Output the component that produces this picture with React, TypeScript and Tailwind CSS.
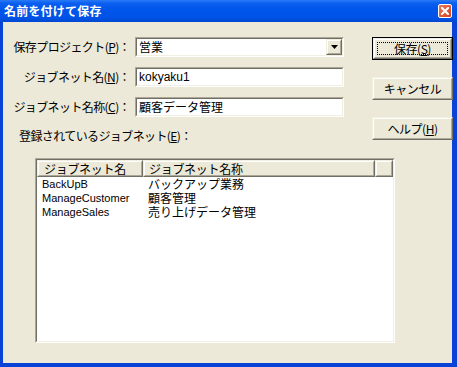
import React from "react";

const font = { fontFamily: '"Noto Sans CJK JP", "Noto Sans", sans-serif' };
const latin = { fontFamily: '"Liberation Sans", "Noto Sans CJK JP", sans-serif' };

function Sunken({ children, className = "" }: { children?: React.ReactNode; className?: string }) {
  return (
    <div className={`border border-t-[#ACA899] border-l-[#ACA899] border-b-white border-r-white ${className}`}>
      <div className="h-full w-full border border-t-[#716F64] border-l-[#716F64] border-b-[#F1EFE2] border-r-[#F1EFE2] bg-white">
        {children}
      </div>
    </div>
  );
}

function Raised({ children, className = "" }: { children?: React.ReactNode; className?: string }) {
  return (
    <div className={`border border-t-[#F1EFE2] border-l-[#F1EFE2] border-b-[#716F64] border-r-[#716F64] ${className}`}>
      <div className="h-full w-full border border-t-white border-l-white border-b-[#ACA899] border-r-[#ACA899] bg-[#ECE9D8]">
        {children}
      </div>
    </div>
  );
}

function Button({ children, def = false }: { children: React.ReactNode; def?: boolean }) {
  if (def) {
    return (
      <div className="h-[23px] w-[81px] border border-black">
        <Raised className="h-full w-full">
          <div className="flex h-full items-center justify-center p-[2px]">
            <div className="flex h-full w-full items-center justify-center border border-dotted border-black text-[12px] leading-none text-black tracking-[-0.5px]">
              {children}
            </div>
          </div>
        </Raised>
      </div>
    );
  }
  return (
    <Raised className="h-[23px] w-[81px]">
      <div className="flex h-full items-center justify-center text-[12px] leading-none text-black tracking-[-0.5px]">{children}</div>
    </Raised>
  );
}

function Row({ label, children }: { label: React.ReactNode; children: React.ReactNode }) {
  return (
    <div className="flex h-[20px] items-center">
      <div className="w-[117px] whitespace-nowrap text-right text-[12px] leading-none tracking-[-0.6px] text-black">{label}</div>
      <div className="ml-[5px] h-full w-[209px]">{children}</div>
    </div>
  );
}

export default function App() {
  const rows = [
    ["BackUpB", "バックアップ業務"],
    ["ManageCustomer", "顧客管理"],
    ["ManageSales", "売り上げデータ管理"],
  ];
  return (
    <div className="h-[367px] w-[457px] overflow-hidden" style={font}>
      <div className="flex h-full w-full flex-col bg-[#0842D6]">
        {/* Title bar */}
        <div className="flex h-[22px] shrink-0 items-center justify-between bg-[linear-gradient(to_bottom,#2a7bf5_0%,#0a5ff0_15%,#0055ea_45%,#0053e6_80%,#0047d0_100%)] pl-[4px] pr-[5px]">
          <span className="text-[12px] font-bold leading-none tracking-[0.2px] text-white">名前を付けて保存</span>
          <div className="flex h-[14px] w-[14px] items-center justify-center rounded-[2px] border border-white bg-[linear-gradient(to_bottom_right,#e97a5c,#d6431f)]">
            <svg width="8" height="8" viewBox="0 0 8 8">
              <path d="M1 1 L7 7 M7 1 L1 7" stroke="white" strokeWidth="2" strokeLinecap="square" />
            </svg>
          </div>
        </div>
        {/* Client */}
        <div className="ml-[3px] mr-[5px] mb-[4px] flex-1 bg-[#ECE9D8]">
          <div className="grid grid-cols-[341px_81px] gap-x-[18px] pl-[10px] pt-[15px]">
            <div className="col-start-1 row-start-1">
              <Row label={<>保存プロジェクト(<u>P</u>)：</>}>
                <Sunken className="h-full w-full">
                  <div className="flex h-full items-center justify-between">
                    <span className="pl-[2px] text-[12px] leading-none text-black">営業</span>
                    <Raised className="h-[16px] w-[16px]">
                      <div className="flex h-full items-center justify-center">
                        <svg width="7" height="4" viewBox="0 0 7 4">
                          <path d="M0 0 H7 L3.5 4 Z" fill="black" />
                        </svg>
                      </div>
                    </Raised>
                  </div>
                </Sunken>
              </Row>
            </div>
            <div className="col-start-1 row-start-2 mt-[10px]">
              <Row label={<>ジョブネット名(<u>N</u>)：</>}>
                <Sunken className="h-full w-full">
                  <div className="flex h-full items-center pl-[2px] text-[12px] leading-none text-black" style={latin}>kokyaku1</div>
                </Sunken>
              </Row>
            </div>
            <div className="col-start-1 row-start-3 mt-[10px]">
              <Row label={<>ジョブネット名称(<u>C</u>)：</>}>
                <Sunken className="h-full w-full">
                  <div className="flex h-full items-center pl-[2px] text-[12px] leading-none text-black">顧客データ管理</div>
                </Sunken>
              </Row>
            </div>
            <div className="col-start-1 row-start-4 mt-[12px] whitespace-nowrap pl-[6px] text-[12px] leading-[14px] tracking-[-0.6px] text-black">
              登録されているジョブネット(<u>E</u>)：
            </div>
            <div className="col-start-2 row-span-4 row-start-1 flex flex-col gap-[17px] self-start">
              <Button def>保存(<u>S</u>)</Button>
              <Button>キャンセル</Button>
              <Button>ヘルプ(<u>H</u>)</Button>
            </div>
            <div className="col-span-2 col-start-1 row-start-5 ml-[22px] mt-[15px] h-[185px] w-[360px]">
              <Sunken className="h-full w-full">
                <div className="flex h-[17px] bg-[#ECE9D8] text-[12px] leading-none tracking-[-0.3px] text-black">
                  <Raised className="h-full w-[106px]">
                    <div className="flex h-full items-center pl-[5px]">ジョブネット名</div>
                  </Raised>
                  <Raised className="h-full w-[232px]">
                    <div className="flex h-full items-center pl-[4px]">ジョブネット名称</div>
                  </Raised>
                  <Raised className="h-full flex-1" />
                </div>
                <div className="text-[12px] text-black">
                  {rows.map(([a, b]) => (
                    <div key={a} className="flex h-[14px] items-center leading-none">
                      <span className="w-[106px] pl-[5px] text-[11px]" style={latin}>{a}</span>
                      <span className="pl-[5px]">{b}</span>
                    </div>
                  ))}
                </div>
              </Sunken>
            </div>
          </div>
        </div>
      </div>
    </div>
  );
}
